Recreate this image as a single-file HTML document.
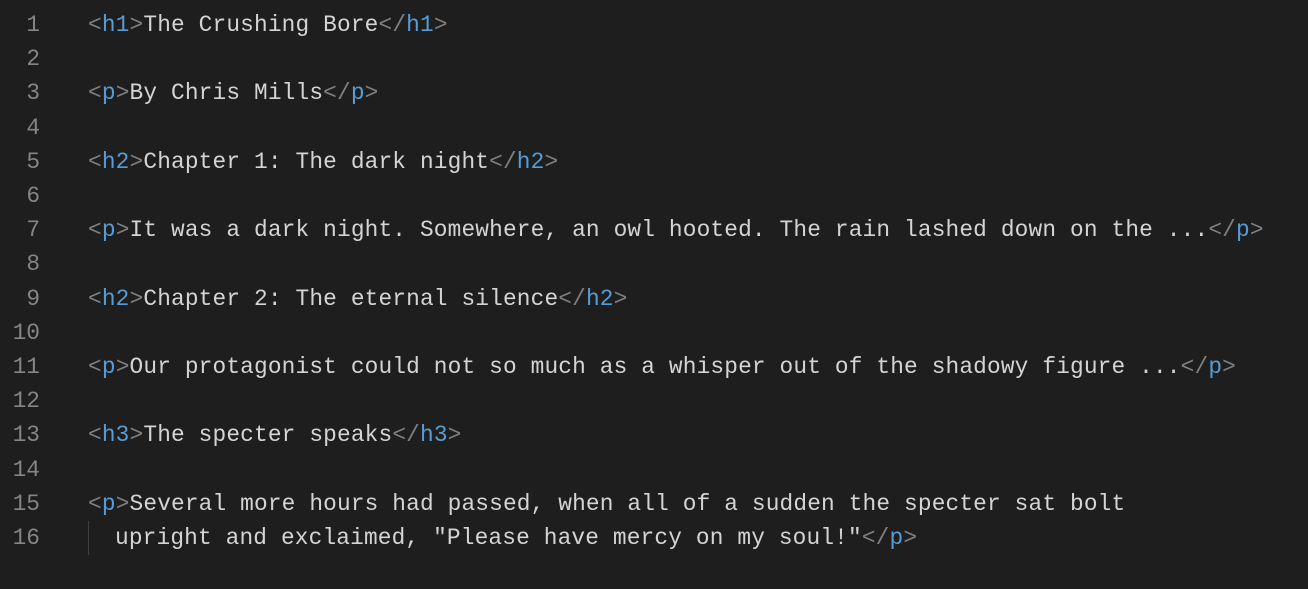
<!DOCTYPE html>
<html><head><style>
html,body{margin:0;background:#1e1e1e;width:1308px;height:560px;overflow:hidden}
.w{position:absolute;top:8px;left:0;font-family:"Liberation Mono",monospace;font-size:22.8px;letter-spacing:0.15px;line-height:34.2px;color:#d4d4d4;white-space:pre}
.n{position:absolute;left:0;width:40px;text-align:right;color:#858585;letter-spacing:0}
.c{position:absolute;left:88px}
.b{color:#808080}.t{color:#569cd6}
.g{position:absolute;left:88px;top:521px;width:1px;height:34px;background:#404040}
</style></head><body>
<div class="g"></div>
<div class="w">
<div class="n" style="top:0">1</div><div class="c" style="top:0"><span class="b">&lt;</span><span class="t">h1</span><span class="b">&gt;</span>The Crushing Bore<span class="b">&lt;/</span><span class="t">h1</span><span class="b">&gt;</span></div>
<div class="n" style="top:34.2px">2</div>
<div class="n" style="top:68.4px">3</div><div class="c" style="top:68.4px"><span class="b">&lt;</span><span class="t">p</span><span class="b">&gt;</span>By Chris Mills<span class="b">&lt;/</span><span class="t">p</span><span class="b">&gt;</span></div>
<div class="n" style="top:102.6px">4</div>
<div class="n" style="top:136.8px">5</div><div class="c" style="top:136.8px"><span class="b">&lt;</span><span class="t">h2</span><span class="b">&gt;</span>Chapter 1: The dark night<span class="b">&lt;/</span><span class="t">h2</span><span class="b">&gt;</span></div>
<div class="n" style="top:171px">6</div>
<div class="n" style="top:205.2px">7</div><div class="c" style="top:205.2px"><span class="b">&lt;</span><span class="t">p</span><span class="b">&gt;</span>It was a dark night. Somewhere, an owl hooted. The rain lashed down on the ...<span class="b">&lt;/</span><span class="t">p</span><span class="b">&gt;</span></div>
<div class="n" style="top:239.4px">8</div>
<div class="n" style="top:273.6px">9</div><div class="c" style="top:273.6px"><span class="b">&lt;</span><span class="t">h2</span><span class="b">&gt;</span>Chapter 2: The eternal silence<span class="b">&lt;/</span><span class="t">h2</span><span class="b">&gt;</span></div>
<div class="n" style="top:307.8px">10</div>
<div class="n" style="top:342px">11</div><div class="c" style="top:342px"><span class="b">&lt;</span><span class="t">p</span><span class="b">&gt;</span>Our protagonist could not so much as a whisper out of the shadowy figure ...<span class="b">&lt;/</span><span class="t">p</span><span class="b">&gt;</span></div>
<div class="n" style="top:376.2px">12</div>
<div class="n" style="top:410.4px">13</div><div class="c" style="top:410.4px"><span class="b">&lt;</span><span class="t">h3</span><span class="b">&gt;</span>The specter speaks<span class="b">&lt;/</span><span class="t">h3</span><span class="b">&gt;</span></div>
<div class="n" style="top:444.6px">14</div>
<div class="n" style="top:478.8px">15</div><div class="c" style="top:478.8px"><span class="b">&lt;</span><span class="t">p</span><span class="b">&gt;</span>Several more hours had passed, when all of a sudden the specter sat bolt</div>
<div class="n" style="top:513px">16</div><div class="c" style="top:513px;left:115px">upright and exclaimed, "Please have mercy on my soul!"<span class="b">&lt;/</span><span class="t">p</span><span class="b">&gt;</span></div>
</div>
</body></html>
